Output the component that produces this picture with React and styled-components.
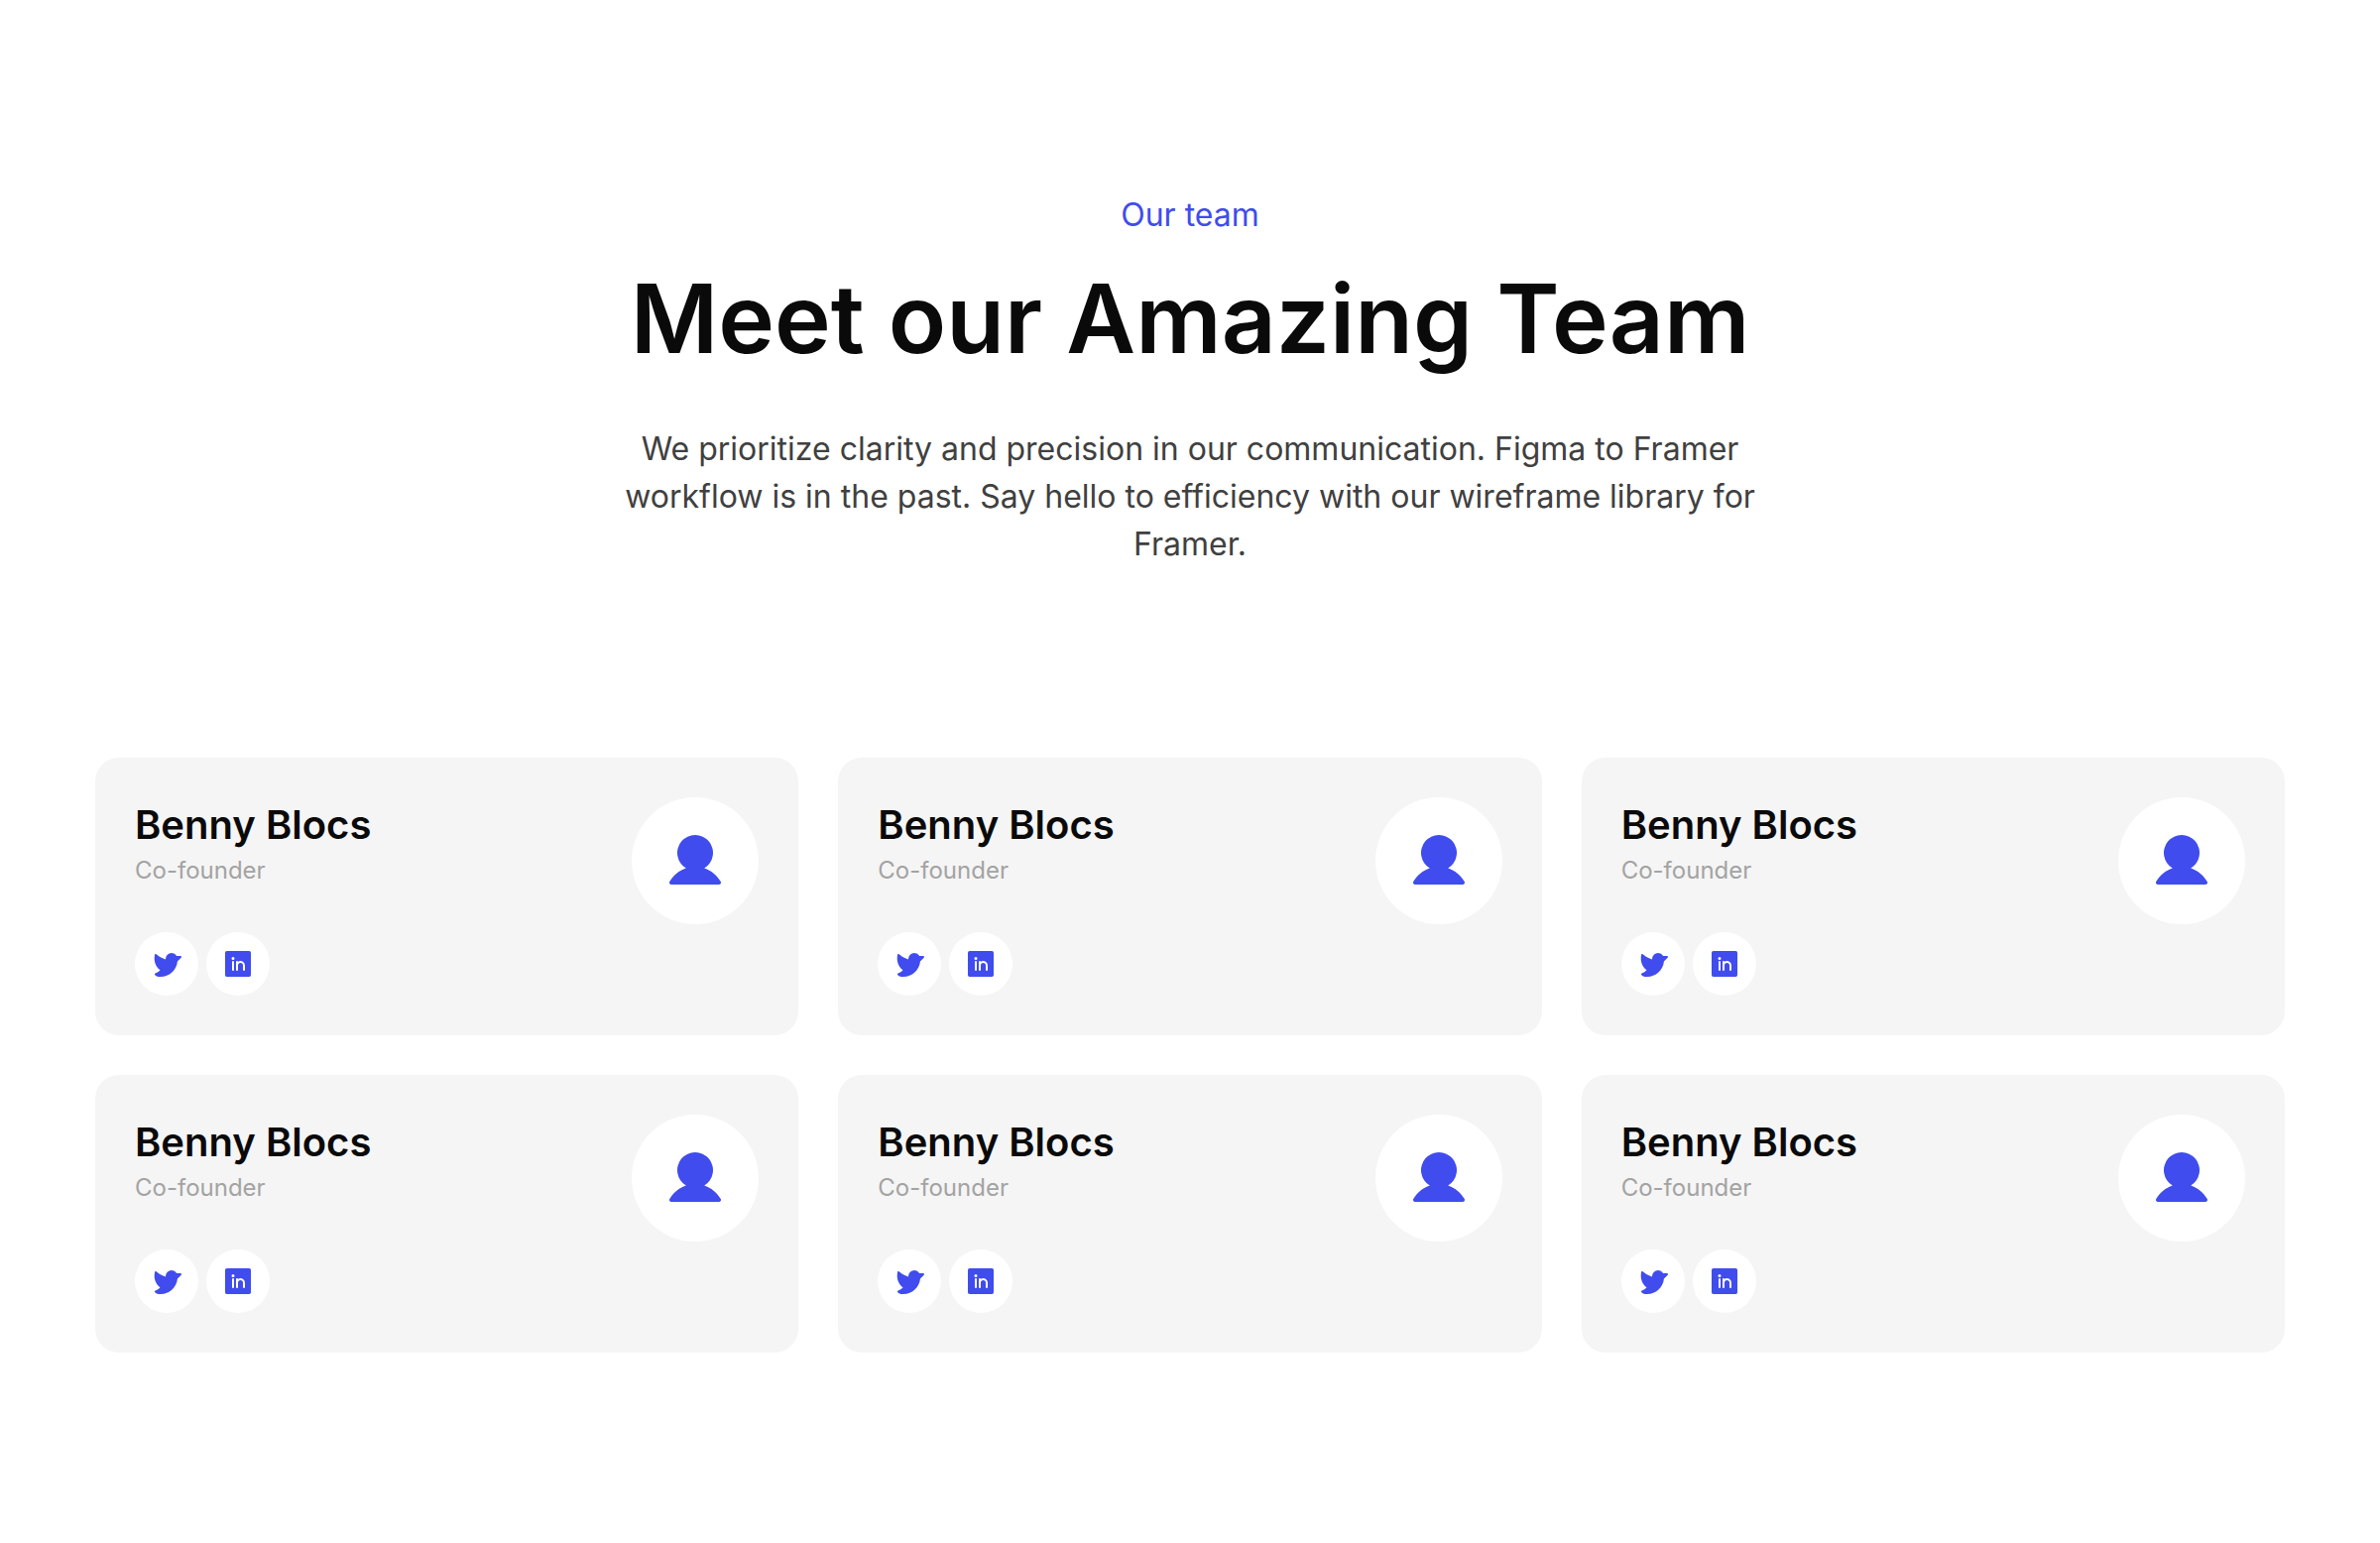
import React from "react";
import styled, { createGlobalStyle } from "styled-components";

const colors = {
  accent: "#404ced",
  ink: "#0a0a0a",
  body: "#404040",
  muted: "#a3a3a3",
  card: "#f5f5f5",
  surface: "#ffffff",
};

const GlobalStyle = createGlobalStyle`
  *, *::before, *::after {
    box-sizing: border-box;
  }

  body {
    margin: 0;
    background: ${colors.surface};
    font-family: Inter, "Liberation Sans", sans-serif;
    -webkit-font-smoothing: antialiased;
  }

  h1, h2, p, ul {
    margin: 0;
    padding: 0;
    font-weight: 400;
  }

  ul {
    list-style: none;
  }
`;

const Section = styled.section`
  display: flex;
  flex-direction: column;
  gap: 191px;
  padding: 193px 96px 192px;
`;

const Header = styled.header`
  display: flex;
  flex-direction: column;
  align-self: center;
  gap: 52px;
  max-width: 1200px;
  text-align: center;
`;

const TitleGroup = styled.div`
  display: flex;
  flex-direction: column;
  gap: 24px;
`;

const Eyebrow = styled.p`
  color: ${colors.accent};
  font-size: 32px;
  line-height: 48px;
`;

const Title = styled.h1`
  color: ${colors.ink};
  font-size: 96px;
  font-weight: 600;
  line-height: 112px;
`;

const Lead = styled.p`
  color: ${colors.body};
  font-size: 32px;
  line-height: 48px;
`;

const TeamGrid = styled.ul`
  display: grid;
  grid-template-columns: repeat(3, 1fr);
  gap: 40px;
`;

const Card = styled.li`
  display: flex;
  justify-content: space-between;
  align-items: flex-start;
  padding: 40px;
  border-radius: 24px;
  background: ${colors.card};
`;

const Details = styled.div`
  display: flex;
  flex-direction: column;
  gap: 44px;
`;

const Name = styled.h2`
  color: ${colors.ink};
  font-size: 40px;
  font-weight: 600;
  line-height: 56px;
`;

const Role = styled.p`
  color: ${colors.muted};
  font-size: 24px;
  line-height: 36px;
`;

const Socials = styled.div`
  display: flex;
  gap: 8px;
`;

const Disc = styled.span`
  display: flex;
  align-items: center;
  justify-content: center;
  flex: none;
  width: ${(p) => p.$size}px;
  height: ${(p) => p.$size}px;
  border-radius: 50%;
  background: ${colors.surface};
  color: ${colors.accent};
`;

const Icon = styled.svg.attrs({ viewBox: "0 0 256 256", "aria-hidden": true })`
  display: block;
  width: ${(p) => p.$size}px;
  height: ${(p) => p.$size}px;
  fill: currentColor;
`;

const paths = {
  user: "M230.93,220a8,8,0,0,1-6.93,4H32a8,8,0,0,1-6.92-12c15.23-26.33,38.7-45.21,66.09-54.16a72,72,0,1,1,73.66,0c27.39,8.95,50.86,27.83,66.09,54.16A8,8,0,0,1,230.93,220Z",
  twitter:
    "M245.66,77.66l-30.17,30.16C209.48,177.74,150.53,232,80,232c-14.52,0-26.49-2.3-35.58-6.84-7.33-3.67-10.34-7.6-11.08-8.72a8,8,0,0,1,3.86-11.93c.29-.11,23.84-9.16,39.08-26.4a110.48,110.48,0,0,1-24.73-24.18C37.84,135.33,23.35,103,32.47,54.76A8,8,0,0,1,45.99,50.6c.35,.35,33.57,31.06,74.01,41.78V88a48.32,48.32,0,0,1,48.61-48A48.12,48.12,0,0,1,209.21,64H240a8,8,0,0,1,5.66,13.66Z",
  linkedin:
    "M218,24H38A14,14,0,0,0,24,38V218a14,14,0,0,0,14,14H218a14,14,0,0,0,14-14V38A14,14,0,0,0,218,24ZM96,176a8,8,0,0,1-16,0V112a8,8,0,0,1,16,0ZM88,96a12,12,0,1,1,12-12A12,12,0,0,1,88,96Zm96,80a8,8,0,0,1-16,0V140a20,20,0,0,0-40,0v36a8,8,0,0,1-16,0V112a8,8,0,0,1,15.79-1.78A36,36,0,0,1,184,140Z",
};

const links = [
  { icon: "twitter", label: "Twitter", href: "#twitter" },
  { icon: "linkedin", label: "LinkedIn", href: "#linkedin" },
];

const team = Array.from({ length: 6 }, (_, id) => ({
  id,
  name: "Benny Blocs",
  role: "Co-founder",
}));

function MemberCard({ name, role }) {
  return (
    <Card>
      <Details>
        <div>
          <Name>{name}</Name>
          <Role>{role}</Role>
        </div>
        <Socials>
          {links.map(({ icon, label, href }) => (
            <Disc as="a" key={icon} href={href} aria-label={label} $size={64}>
              <Icon $size={32}>
                <path d={paths[icon]} />
              </Icon>
            </Disc>
          ))}
        </Socials>
      </Details>
      <Disc $size={128}>
        <Icon $size={64}>
          <path d={paths.user} />
        </Icon>
      </Disc>
    </Card>
  );
}

export default function App() {
  return (
    <>
      <GlobalStyle />
      <Section>
        <Header>
          <TitleGroup>
            <Eyebrow>Our team</Eyebrow>
            <Title>Meet our Amazing Team</Title>
          </TitleGroup>
          <Lead>
            We prioritize clarity and precision in our communication. Figma to
            Framer workflow is in the past. Say hello to efficiency with our
            wireframe library for Framer.
          </Lead>
        </Header>
        <TeamGrid>
          {team.map((member) => (
            <MemberCard key={member.id} {...member} />
          ))}
        </TeamGrid>
      </Section>
    </>
  );
}
